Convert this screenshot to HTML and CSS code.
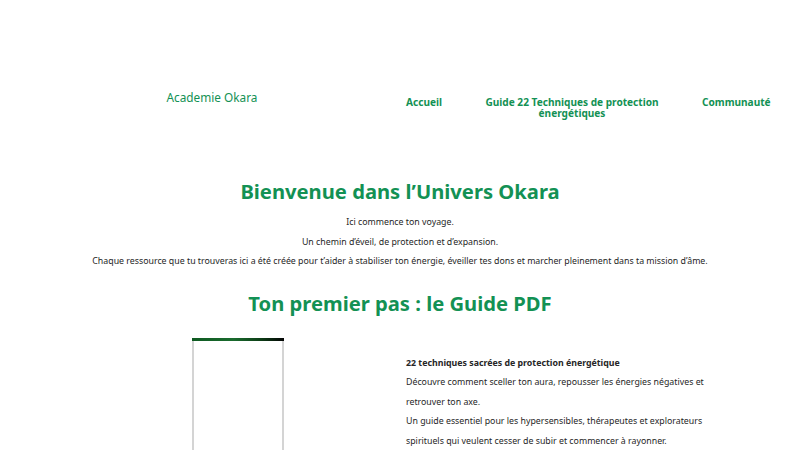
FILE: index.html
```html
<!DOCTYPE html>
<html lang="fr">
<head>
<meta charset="utf-8">
<title>Academie Okara</title>
<link rel="stylesheet" href="styles.css">
</head>
<body>
<header class="site-header">
  <div class="logo">Academie Okara</div>
  <nav class="nav">
    <a class="nav-item" href="#">Accueil</a>
    <a class="nav-item nav-guide" href="#">Guide 22 Techniques de protection énergétiques</a>
    <a class="nav-item" href="#">Communauté</a>
  </nav>
</header>
<main>
  <section class="intro">
    <h1 class="title">Bienvenue dans l’Univers Okara</h1>
    <p>Ici commence ton voyage.</p>
    <p>Un chemin d’éveil, de protection et d’expansion.</p>
    <p>Chaque ressource que tu trouveras ici a été créée pour t’aider à stabiliser ton énergie, éveiller tes dons et marcher pleinement dans ta mission d’âme.</p>
  </section>
  <section class="guide">
    <h2 class="title">Ton premier pas : le Guide PDF</h2>
    <div class="guide-row">
      <div class="cover"><div class="cover-band"></div></div>
      <div class="guide-text">
        <p class="strong">22 techniques sacrées de protection énergétique</p>
        <p>Découvre comment sceller ton aura, repousser les énergies négatives et retrouver ton axe.<br>Un guide essentiel pour les hypersensibles, thérapeutes et explorateurs spirituels qui veulent cesser de subir et commencer à rayonner.</p>
      </div>
    </div>
  </section>
</main>
</body>
</html>
```
FILE: styles.css
```css
* { box-sizing: border-box; }
html, body { margin: 0; padding: 0; background: #fff; }
body {
  font-family: "Noto Sans", "Open Sans", sans-serif;
  color: #262626;
  width: 800px;
  height: 450px;
  overflow: hidden;
}
.site-header {
  display: flex;
  align-items: flex-start;
  padding-top: 88px;
  height: 150px;
}
.logo {
  width: 406px;
  padding-left: 18px;
  text-align: center;
  color: #139154;
  font-size: 11.8px;
  line-height: 18px;
}
.nav {
  display: flex;
  gap: 40px;
  padding-top: 9px;
}
.nav-item {
  color: #139154;
  font-weight: 700;
  font-size: 10.1px;
  line-height: 11px;
  text-decoration: none;
  text-align: center;
}
.nav-guide { width: 180px; }
.intro, .guide { text-align: center; }
.title {
  color: #139154;
  font-size: 20.2px;
  font-weight: 700;
  line-height: 30px;
  margin: 26px 0 6px;
}
.intro p {
  font-size: 8.8px;
  line-height: 20px;
  margin: 0;
}
.intro p:last-child { line-height: 19px; }
.guide .title { margin-top: 17px; }
.guide-row {
  display: flex;
  text-align: left;
  padding-left: 192px;
  gap: 122px;
  margin-top: 20px;
}
.cover {
  width: 92px;
  height: 140px;
  border-left: 2px solid #d4d4d4;
  border-right: 2px solid #d4d4d4;
  background: #fff;
  flex: none;
}
.cover-band {
  height: 3px;
  margin: 0 -2px;
  background: linear-gradient(90deg, #0f5a22 0%, #1a6b2e 45%, #0c3d16 75%, #050505 100%);
}
.guide-text {
  width: 302px;
  padding-top: 16px;
  font-size: 8.8px;
  line-height: 19.4px;
}
.guide-text p { margin: 0; }
.strong { font-weight: 700; }
```
